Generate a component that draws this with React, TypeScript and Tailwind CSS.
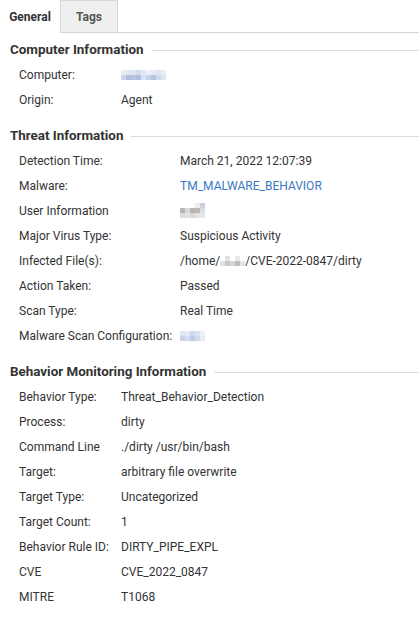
const font = { fontFamily: 'Roboto, "Liberation Sans", sans-serif' };

type Row = { label: string; value: React.ReactNode };

function Blur({ cells }: { cells: string[][] }) {
  return (
    <span className="inline-flex flex-col align-middle">
      {cells.map((line, i) => (
        <span key={i} className="flex">
          {line.map((c, j) => (
            <span key={j} className="block w-[5px] h-[5px]" style={{ background: c }} />
          ))}
        </span>
      ))}
    </span>
  );
}

const computerBlur = [
  ['#e6ebf5', '#e3e8f3', '#dce3f1', '#d5dcee', '#e1e7f4', '#eef0f7', '#e7ebf5', '#dfe6f3', '#e8edf6'],
  ['#c9d3ea', '#b2bfe0', '#b9c5e3', '#aebfe3', '#dce2f1', '#c6d1ea', '#b7c4e3', '#d0d9ee', '#dfe5f3'],
];
const userBlur = [
  ['#ffffff', '#ffffff', '#ffffff', '#f2ece6', '#c8d0e2'],
  ['#b9b4b3', '#d8d8dc', '#b7b4b5', '#bcb8b6', '#d9dde6'],
  ['#dedcda', '#e1e1e4', '#d9d9dd', '#e7e4e1', '#e3e6ee'],
];
const homeBlur = [
  ['#ffffff', '#e2e2e4', '#ffffff', '#e9e9eb', '#ffffff'],
  ['#e2e2e2', '#c9c9cb', '#d6d6d8', '#bdbdbf', '#e4e4e6'],
];
const configBlur = [
  ['#dfe5f3', '#e4e9f4', '#cdd6ec', '#dbe2f1', '#eef1f8'],
  ['#c9d3ea', '#d4dcee', '#bfcbe6', '#d1d9ed', '#e6ebf5'],
];

const computer: Row[] = [
  { label: 'Computer:', value: <Blur cells={computerBlur} /> },
  { label: 'Origin:', value: 'Agent' },
];

const threat: Row[] = [
  { label: 'Detection Time:', value: 'March 21, 2022 12:07:39' },
  { label: 'Malware:', value: <span className="text-[#3a78c4]">TM_MALWARE_BEHAVIOR</span> },
  { label: 'User Information', value: <Blur cells={userBlur} /> },
  { label: 'Major Virus Type:', value: 'Suspicious Activity' },
  {
    label: 'Infected File(s):',
    value: (
      <span className="inline-flex items-center">
        /home/
        <Blur cells={homeBlur} />
        /CVE-2022-0847/dirty
      </span>
    ),
  },
  { label: 'Action Taken:', value: 'Passed' },
  { label: 'Scan Type:', value: 'Real Time' },
  { label: 'Malware Scan Configuration:', value: <Blur cells={configBlur} /> },
];

const behavior: Row[] = [
  { label: 'Behavior Type:', value: 'Threat_Behavior_Detection' },
  { label: 'Process:', value: 'dirty' },
  { label: 'Command Line', value: './dirty /usr/bin/bash' },
  { label: 'Target:', value: 'arbitrary file overwrite' },
  { label: 'Target Type:', value: 'Uncategorized' },
  { label: 'Target Count:', value: '1' },
  { label: 'Behavior Rule ID:', value: 'DIRTY_PIPE_EXPL' },
  { label: 'CVE', value: 'CVE_2022_0847' },
  { label: 'MITRE', value: 'T1068' },
];

function Section({ title, rows, labelWidth }: { title: string; rows: Row[]; labelWidth: string }) {
  return (
    <section className="mb-[12px]">
      <div className="flex items-center h-[24px] pl-[10px]">
        <h3 className="text-[13.4px] font-bold text-[#333] whitespace-nowrap">{title}</h3>
        <div className="flex-1 h-px bg-[#dcdcdc] ml-[8px]" />
      </div>
      <div className="pl-[19px]">
        {rows.map((r) => (
          <div key={r.label} className="flex items-center h-[25px] text-[12px] text-[#333]">
            <div className={labelWidth + ' shrink-0'}>{r.label}</div>
            <div className="flex items-center">{r.value}</div>
          </div>
        ))}
      </div>
    </section>
  );
}

export default function App() {
  return (
    <div className="w-[419px] h-[625px] bg-white overflow-hidden" style={font}>
      <div className="flex h-[33px] border-b border-[#d6d6d6]">
        <div className="w-[60px] -mb-px bg-white flex items-center justify-center text-[12px] font-bold text-[#333]">
          General
        </div>
        <div className="w-[58px] bg-[#efefef] border border-b-0 border-[#d6d6d6] flex items-center justify-center text-[12px] font-bold text-[#555]">
          Tags
        </div>
      </div>
      <div className="pt-[5px]">
        <Section title="Computer Information" rows={computer} labelWidth="w-[102px]" />
        <Section title="Threat Information" rows={threat} labelWidth="w-[161px]" />
        <Section title="Behavior Monitoring Information" rows={behavior} labelWidth="w-[102px]" />
      </div>
    </div>
  );
}
